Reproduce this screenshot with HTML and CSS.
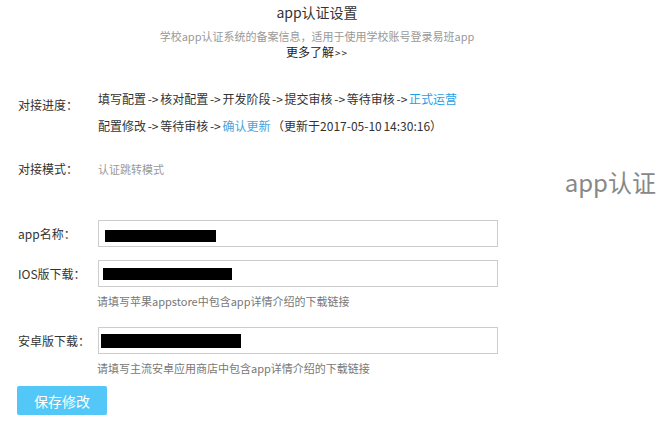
FILE: index.html
```html
<!DOCTYPE html>
<html lang="zh-CN">
<head>
    <meta charset="UTF-8">
    <meta name="viewport" content="width=device-width, initial-scale=1.0">
    <title>app认证设置</title>
    <link rel="stylesheet" href="styles.css">
</head>
<body>
    <div class="page">
        <div class="header">
            <h1>app认证设置</h1>
            <p class="desc">学校app认证系统的备案信息，适用于使用学校账号登录易班app</p>
            <a href="#" class="more">更多了解<span class="arrows">&gt;&gt;</span></a>
        </div>

        <div class="row progress">
            <div class="label">对接进度：</div>
            <div class="steps">
                <div class="line">填写配置 -&gt; 核对配置 -&gt; 开发阶段 -&gt; 提交审核 -&gt; 等待审核 -&gt; <span class="current">正式运营</span></div>
                <div class="line">配置修改 -&gt; 等待审核 -&gt; <span class="pending">确认更新</span> （更新于2017-05-10 14:30:16）</div>
            </div>
        </div>

        <div class="row mode">
            <div class="label">对接模式：</div>
            <div class="value">认证跳转模式</div>
            <div class="badge">app认证</div>
        </div>

        <div class="row field first">
            <div class="label">app名称：</div>
            <div class="input"><span class="redact r1" style="width:111px"></span></div>
        </div>

        <div class="row field">
            <div class="label">IOS版下载：</div>
            <div class="input"><span class="redact r2" style="width:129px"></span></div>
        </div>
        <div class="hint">请填写苹果appstore中包含app详情介绍的下载链接</div>

        <div class="row field">
            <div class="label">安卓版下载：</div>
            <div class="input"><span class="redact r3" style="width:140px"></span></div>
        </div>
        <div class="hint">请填写主流安卓应用商店中包含app详情介绍的下载链接</div>

        <button class="save">保存修改</button>
    </div>
</body>
</html>
```

FILE: styles.css
```css
body {
    margin: 0;
    font-family: "Noto Sans CJK SC", "Noto Sans", sans-serif;
    font-size: 12px;
    color: #333;
    background-color: #fff;
    overflow: hidden;
}

.page {
    width: 666px;
    padding: 0 0 0 18px;
    box-sizing: border-box;
}

.header {
    text-align: center;
    width: 634px;
    margin-left: -18px;
}

h1 {
    margin: 0;
    font-size: 14px;
    font-weight: normal;
    line-height: 24px;
    color: #333;
}

.desc {
    margin: 4px 0 0;
    font-size: 11px;
    line-height: 16px;
    color: #999;
}

.more {
    display: block;
    line-height: 16px;
    color: #222;
    text-decoration: none;
}

.more .arrows {
    font-size: 10px;
    letter-spacing: 1px;
    margin-left: 1px;
}

.row {
    display: flex;
}

.label {
    width: 80px;
    flex-shrink: 0;
}

/* progress */
.progress {
    margin-top: 24px;
}

.progress .label {
    line-height: 27px;
    padding-top: 6px;
}

.steps .line {
    line-height: 27px;
    word-spacing: -1px;
}

.current {
    color: #1f9fe6;
}

.pending {
    color: #4aa3dd;
}

/* mode */
.mode {
    margin-top: 20px;
    align-items: flex-start;
}

.mode .label,
.mode .value {
    line-height: 20px;
}

.mode .value {
    font-size: 11px;
    color: #999;
}

.badge {
    margin-left: auto;
    margin-top: 8px;
    margin-right: 10px;
    font-size: 24px;
    line-height: 30px;
    color: #888;
}

/* form */
.field {
    align-items: center;
    margin-top: 13px;
}

.field.first {
    margin-top: 23px;
}

.hint + .field {
    margin-top: 18px;
}

.input {
    width: 400px;
    height: 27px;
    border: 1px solid #ccc;
    box-sizing: border-box;
    display: flex;
    align-items: flex-start;
}

.redact {
    display: block;
    height: 12px;
    background-color: #000;
}

.r1 { margin: 9px 0 0 6px; }
.r2 { margin: 7px 0 0 4px; }
.r3 { margin: 6px 0 0 2px; height: 14px; }

.hint {
    margin: 6px 0 0 79px;
    font-size: 11px;
    line-height: 16px;
    color: #777;
}

.save {
    display: block;
    margin: 10px 0 0 -1px;
    width: 90px;
    height: 29px;
    padding: 0;
    border: none;
    border-radius: 2px;
    background-color: #53c7f7;
    color: #fff;
    font-family: inherit;
    font-size: 14px;
    cursor: pointer;
}
```
